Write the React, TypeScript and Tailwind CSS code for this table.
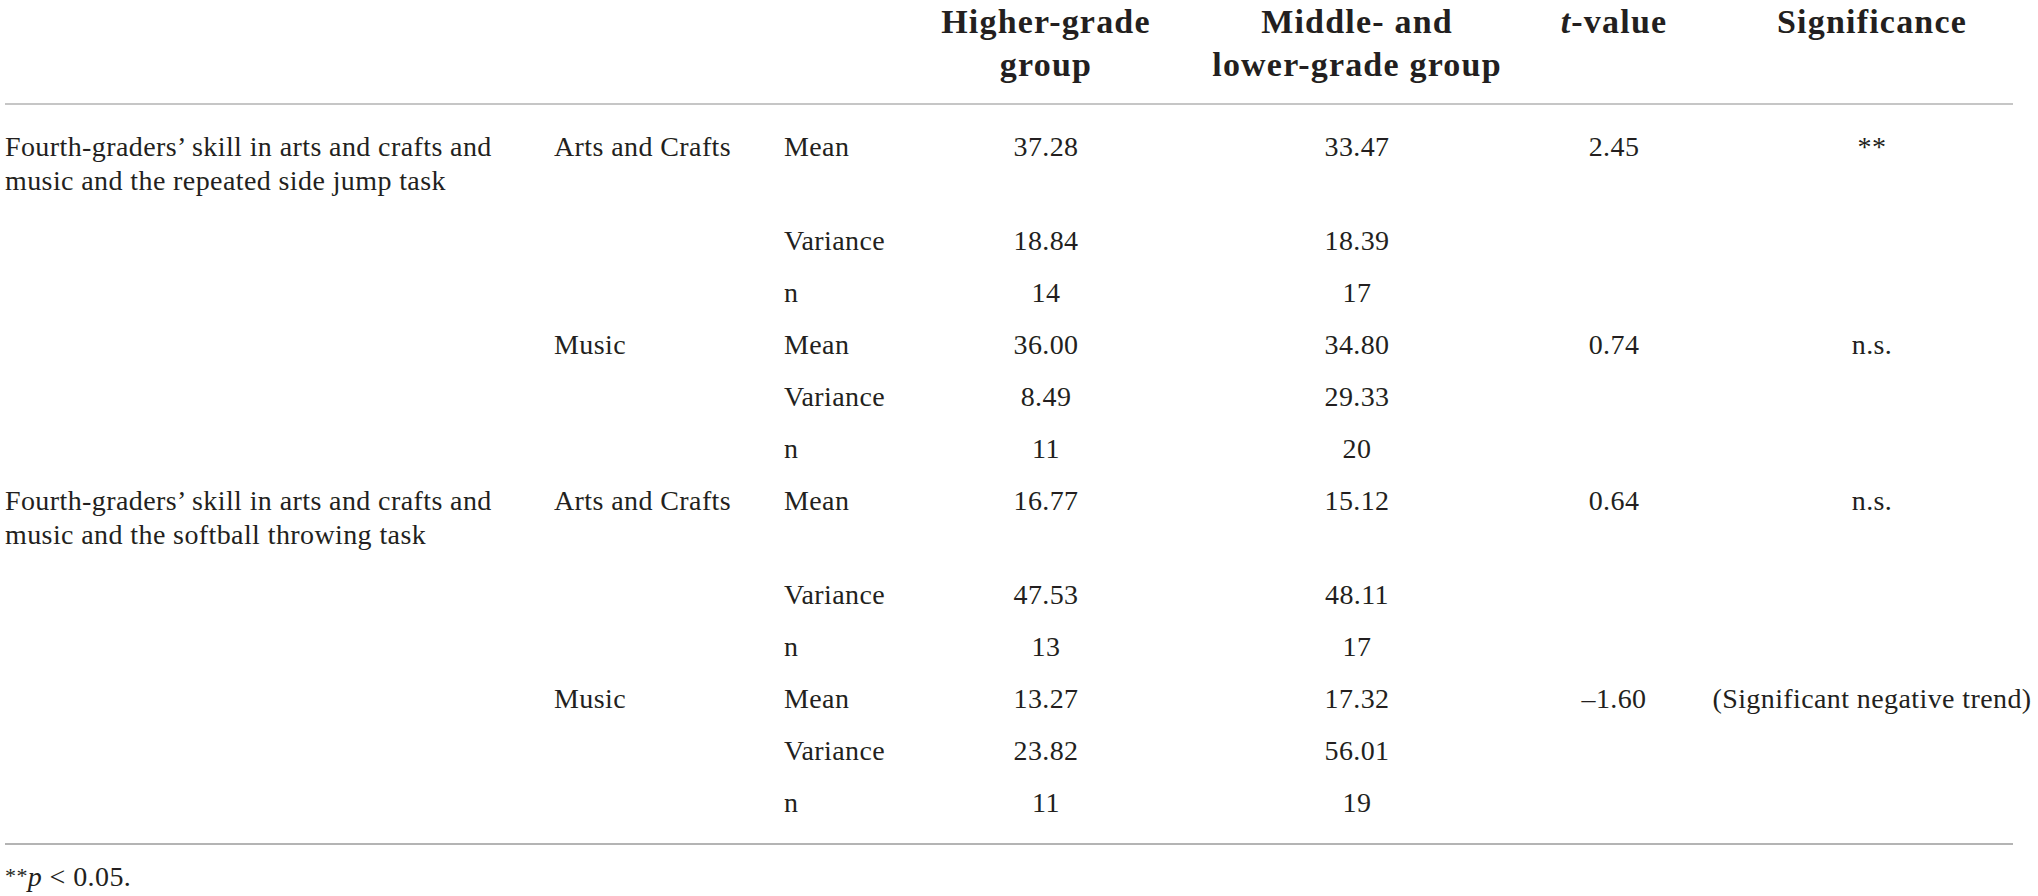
import React from "react";

type Row = {
  label?: string[];
  subject?: string;
  stat: string;
  hi: string;
  lo: string;
  t?: string;
  sig?: string;
  tall?: boolean;
};

const rows: Row[] = [
  {
    label: ["Fourth-graders’ skill in arts and crafts and", "music and the repeated side jump task"],
    subject: "Arts and Crafts",
    stat: "Mean",
    hi: "37.28",
    lo: "33.47",
    t: "2.45",
    sig: "**",
    tall: true,
  },
  { stat: "Variance", hi: "18.84", lo: "18.39" },
  { stat: "n", hi: "14", lo: "17" },
  { subject: "Music", stat: "Mean", hi: "36.00", lo: "34.80", t: "0.74", sig: "n.s." },
  { stat: "Variance", hi: "8.49", lo: "29.33" },
  { stat: "n", hi: "11", lo: "20" },
  {
    label: ["Fourth-graders’ skill in arts and crafts and", "music and the softball throwing task"],
    subject: "Arts and Crafts",
    stat: "Mean",
    hi: "16.77",
    lo: "15.12",
    t: "0.64",
    sig: "n.s.",
    tall: true,
  },
  { stat: "Variance", hi: "47.53", lo: "48.11" },
  { stat: "n", hi: "13", lo: "17" },
  {
    subject: "Music",
    stat: "Mean",
    hi: "13.27",
    lo: "17.32",
    t: "–1.60",
    sig: "(Significant negative trend)",
  },
  { stat: "Variance", hi: "23.82", lo: "56.01" },
  { stat: "n", hi: "11", lo: "19" },
];

const cols = "grid grid-cols-[549px_230px_116px_292px_330px_184px_332px]";

export default function App() {
  return (
    <div className="min-h-screen w-[2038px] bg-white pl-[5px] text-[#231f20] font-['Liberation_Serif',serif]">
      {/* header */}
      <div className={`${cols} h-[86px] text-[34px] leading-[43px] font-bold tracking-[1.2px] text-center`}>
        <div />
        <div />
        <div />
        <div>
          Higher-grade
          <br />
          group
        </div>
        <div>
          Middle- and
          <br />
          lower-grade group
        </div>
        <div>
          <i>t</i>-value
        </div>
        <div>Significance</div>
      </div>
      <div className="mt-[17px] h-[2px] w-[2008px] bg-[#c6c6c6]" />

      {/* body */}
      <div className="pt-[16px] text-[28px] leading-[34px] tracking-[0.4px]">
        {rows.map((r, i) => (
          <div key={i} className={`${cols} items-start pt-[9px] ${r.tall ? "h-[94px]" : "h-[52px]"}`}>
            <div>
              {r.label?.map((l) => (
                <div key={l}>{l}</div>
              ))}
            </div>
            <div>{r.subject}</div>
            <div>{r.stat}</div>
            <div className="text-center">{r.hi}</div>
            <div className="text-center">{r.lo}</div>
            <div className="text-center">{r.t}</div>
            <div className="text-center">{r.sig}</div>
          </div>
        ))}
      </div>

      <div className="mt-[14px] h-[2px] w-[2008px] bg-[#b4b4b4]" />
      <p className="mt-[15px] text-[28px] leading-[34px] tracking-[0.4px]">
        <span className="relative -top-[3px] text-[22px]">**</span>
        <i>p</i> &lt; 0.05.
      </p>
    </div>
  );
}
